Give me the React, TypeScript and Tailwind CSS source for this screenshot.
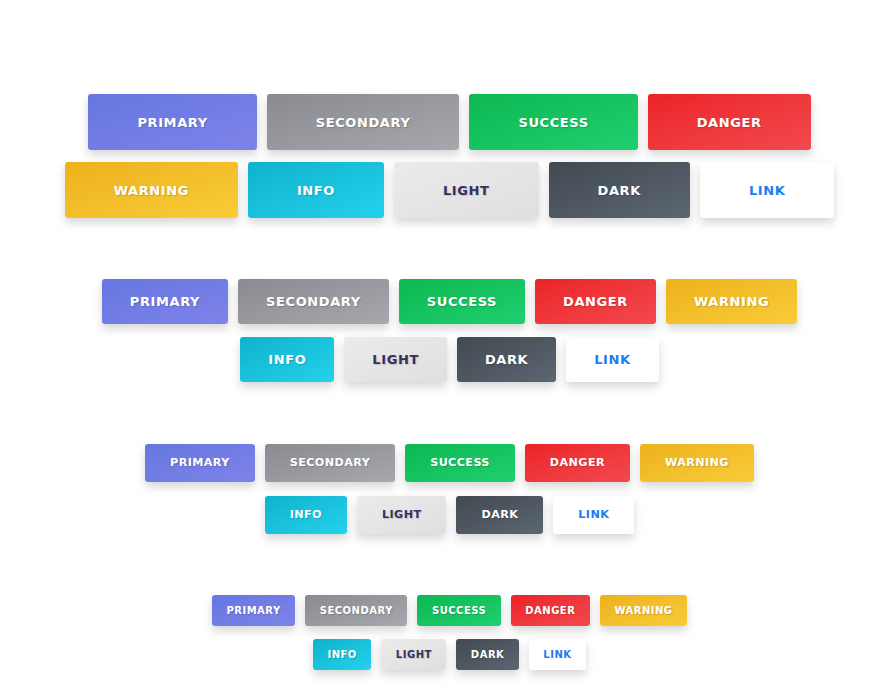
import React from "react";

type Kind = "primary" | "secondary" | "success" | "danger" | "warning" | "info" | "light" | "dark" | "link";

const kindClass: Record<Kind, string> = {
  primary: "bg-linear-to-br from-[#6677e0] to-[#7d83e9] text-white [text-shadow:1px_1px_1px_rgba(0,0,0,0.18)]",
  secondary: "bg-linear-to-br from-[#8a8b90] to-[#a7a8ad] text-white [text-shadow:1px_1px_1px_rgba(0,0,0,0.18)]",
  success: "bg-linear-to-br from-[#0db852] to-[#1fcf6e] text-white [text-shadow:1px_1px_1px_rgba(0,0,0,0.18)]",
  danger: "bg-linear-to-br from-[#eb2226] to-[#f2484e] text-white [text-shadow:1px_1px_1px_rgba(0,0,0,0.18)]",
  warning: "bg-linear-to-br from-[#ecb21c] to-[#f9cc38] text-white [text-shadow:1px_1px_1px_rgba(0,0,0,0.18)]",
  info: "bg-linear-to-br from-[#0db3cd] to-[#24d1ec] text-white [text-shadow:1px_1px_1px_rgba(0,0,0,0.18)]",
  light: "bg-linear-to-br from-[#ebebeb] to-[#dfdfdf] text-[#37305c] [text-shadow:1px_1px_1px_rgba(0,0,0,0.15)]",
  dark: "bg-linear-to-br from-[#424951] to-[#5c6772] text-white [text-shadow:1px_1px_1px_rgba(0,0,0,0.18)]",
  link: "bg-white text-[#1b7cf4]",
};

type Size = "lg" | "md" | "sm" | "xs";

const sizeClass: Record<Size, string> = {
  lg: "h-[56px] px-[49px] text-[13px] tracking-[0.6px]",
  md: "h-[45px] px-[28px] text-[13px] tracking-[0.6px]",
  sm: "h-[38px] px-[25px] text-[11.2px] tracking-[0.4px]",
  xs: "h-[31px] px-[14.5px] text-[10px] tracking-[0.5px]",
};

function Btn({ kind, size }: { kind: Kind; size: Size }) {
  return (
    <button
      className={`flex items-center justify-center rounded-[3px] font-bold uppercase shadow-[0_5px_10px_rgba(0,0,0,0.16)] ${sizeClass[size]} ${kindClass[kind]}`}
    >
      <span className="leading-none">{kind}</span>
    </button>
  );
}

function Row({ kinds, size }: { kinds: Kind[]; size: Size }) {
  return (
    <div className="flex justify-center gap-[10px] pl-[10px]">
      {kinds.map((k) => (
        <Btn key={k} kind={k} size={size} />
      ))}
    </div>
  );
}

export default function App() {
  const r1: Kind[] = ["primary", "secondary", "success", "danger", "warning"];
  const r2: Kind[] = ["info", "light", "dark", "link"];
  return (
    <div className="w-[889px] h-[689px] bg-white pt-[94px] font-['DejaVu_Sans',sans-serif] flex flex-col gap-[61px]">
      <div className="flex flex-col gap-[12px]">
        <Row kinds={["primary", "secondary", "success", "danger"]} size="lg" />
        <Row kinds={["warning", "info", "light", "dark", "link"]} size="lg" />
      </div>
      <div className="flex flex-col gap-[13px]">
        <Row kinds={r1} size="md" />
        <Row kinds={r2} size="md" />
      </div>
      <div className="flex flex-col gap-[14px] pt-[1px]">
        <Row kinds={r1} size="sm" />
        <Row kinds={r2} size="sm" />
      </div>
      <div className="flex flex-col gap-[13px]">
        <Row kinds={r1} size="xs" />
        <Row kinds={r2} size="xs" />
      </div>
    </div>
  );
}
